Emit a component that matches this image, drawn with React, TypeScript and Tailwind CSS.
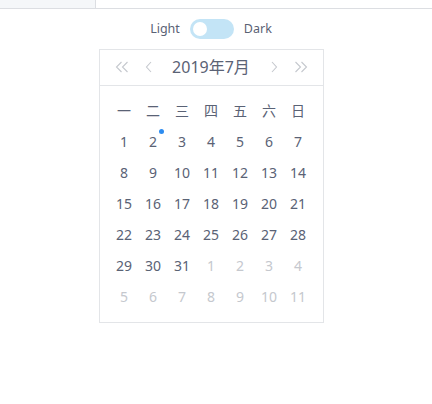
import React from "react";

const weekdays = ["一", "二", "三", "四", "五", "六", "日"];

type Day = { n: number; cur: boolean; dot?: boolean };

const buildDays = (): Day[] => {
	const days: Day[] = [];
	for (let i = 1; i <= 31; i++) days.push({ n: i, cur: true, dot: i === 2 });
	for (let i = 1; i <= 11; i++) days.push({ n: i, cur: false });
	return days;
};

const DoubleLeft = () => (
	<svg width="14" height="12" viewBox="0 0 14 12" fill="none" stroke="#c5c8ce" strokeWidth="1.1">
		<path d="M6.5 1 L1.5 6 L6.5 11" />
		<path d="M12.5 1 L7.5 6 L12.5 11" />
	</svg>
);

const SingleLeft = () => (
	<svg width="8" height="12" viewBox="0 0 8 12" fill="none" stroke="#c5c8ce" strokeWidth="1.1">
		<path d="M6 1 L1.5 6 L6 11" />
	</svg>
);

const SingleRight = () => (
	<svg width="8" height="12" viewBox="0 0 8 12" fill="none" stroke="#c5c8ce" strokeWidth="1.1">
		<path d="M2 1 L6.5 6 L2 11" />
	</svg>
);

const DoubleRight = () => (
	<svg width="14" height="12" viewBox="0 0 14 12" fill="none" stroke="#c5c8ce" strokeWidth="1.1">
		<path d="M1.5 1 L6.5 6 L1.5 11" />
		<path d="M7.5 1 L12.5 6 L7.5 11" />
	</svg>
);

const App: React.FC = () => {
	const days = buildDays();

	return (
		<div
			className="min-h-[404px] bg-white text-[#5a6275]"
			style={{ fontFamily: '"Noto Sans", "Noto Sans CJK SC", sans-serif' }}
		>
			<div className="h-[9px] border-b border-[#dcdee2]">
				<div className="w-[96px] h-full bg-[#f5f7f9] border-r border-[#dcdee2]"></div>
			</div>

			<div className="flex flex-col items-center pr-[10px]">
				<div className="flex items-center mt-[10px] h-[20px]">
					<span className="text-[12.5px] leading-none">Light</span>
					<div className="relative w-[44px] h-[20px] mx-[10px] rounded-full bg-[#c3e4f6]">
						<div className="absolute left-[3px] top-[3px] w-[14px] h-[14px] rounded-full bg-white"></div>
					</div>
					<span className="text-[12.5px] leading-none">Dark</span>
				</div>

				<div className="mt-[10px] w-[225px] border border-[#e3e5e8] bg-white">
					<div className="relative flex items-center h-[36px] pb-[2px] border-b border-[#e3e5e8]">
						<span className="absolute left-[15px] top-[11px]">
							<DoubleLeft />
						</span>
						<span className="absolute left-[45px] top-[11px]">
							<SingleLeft />
						</span>
						<span className="mx-auto text-[16px] leading-none">2019年7月</span>
						<span className="absolute right-[45px] top-[11px]">
							<SingleRight />
						</span>
						<span className="absolute right-[15px] top-[11px]">
							<DoubleRight />
						</span>
					</div>

					<div className="px-[10px] pt-[9px] pb-[10px]">
						<div className="grid grid-cols-7">
							{weekdays.map((w) => (
								<div key={w} className="h-[31px] flex items-center justify-center text-[14px]">
									{w}
								</div>
							))}
							{days.map((d, i) => (
								<div
									key={i}
									className={
										"h-[31px] flex items-center justify-center text-[14px] " +
										(d.cur ? "text-[#5a6275]" : "text-[#c5c8ce]")
									}
								>
									<span className="relative leading-none">
										{d.n}
										{d.dot && (
											<span className="absolute right-[-7px] top-[-6px] w-[5px] h-[5px] rounded-full bg-[#2d8cf0]"></span>
										)}
									</span>
								</div>
							))}
						</div>
					</div>
				</div>
			</div>
		</div>
	);
};

export default App;
